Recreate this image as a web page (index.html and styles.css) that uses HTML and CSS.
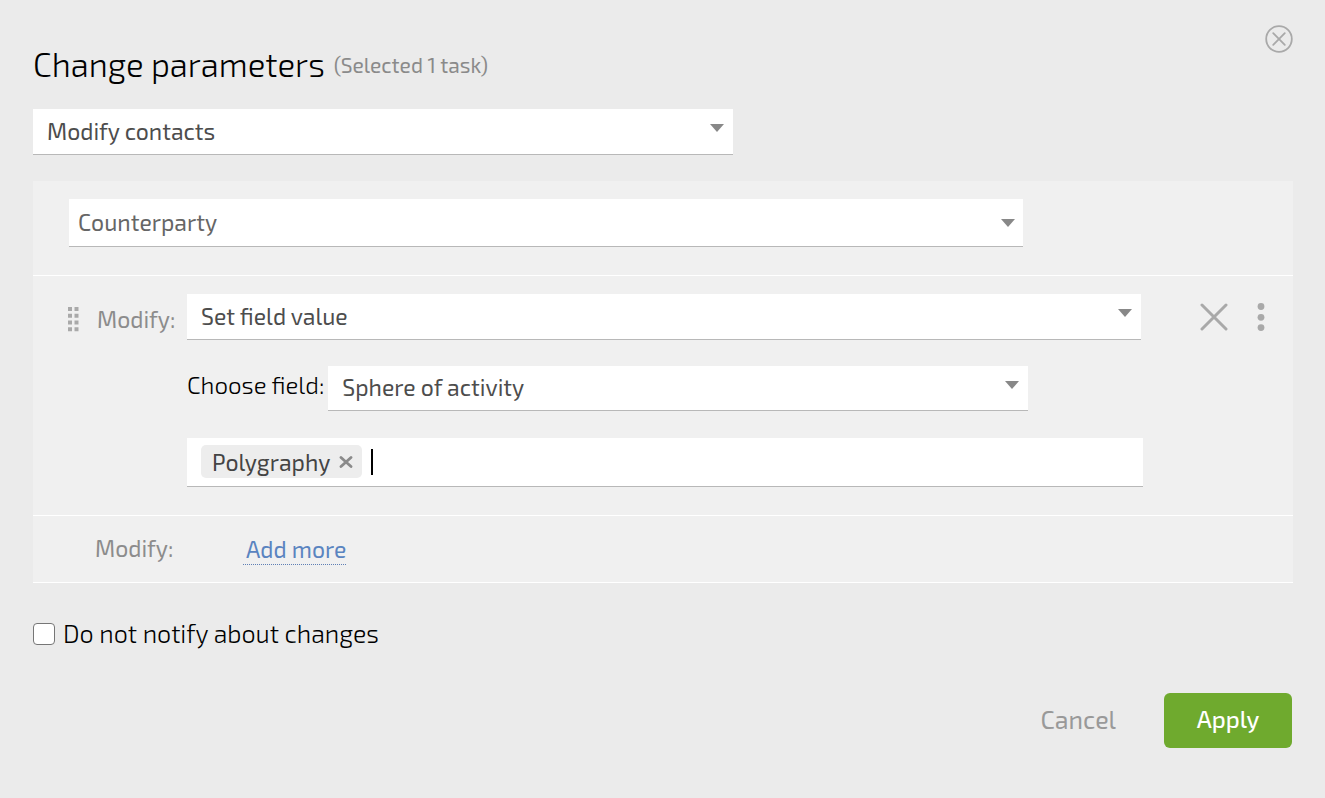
FILE: index.html
```html
<!DOCTYPE html>
<html lang="en">
<head>
<meta charset="utf-8">
<title>Change parameters</title>
<link rel="stylesheet" href="styles.css">
</head>
<body>
<form class="dialog">
  <header class="dialog-header">
    <h1 class="title">Change parameters</h1>
    <span class="subtitle">(Selected 1 task)</span>
    <button class="icon-button close" type="button" aria-label="Close">
      <svg width="28" height="28" viewBox="0 0 28 28" fill="none" stroke="#a9a9a9" stroke-width="1.8" stroke-linecap="round"><circle cx="14" cy="14" r="12.8"/><path d="M8.2 8.2l11.6 11.6M19.8 8.2L8.2 19.8"/></svg>
    </button>
  </header>

  <div class="select select-medium select-raised">
    <select aria-label="Action"><option>Modify contacts</option></select>
  </div>

  <section class="panel">
    <div class="row row-target">
      <div class="select select-wide select-target">
        <select aria-label="Contact type"><option>Counterparty</option></select>
      </div>
    </div>

    <div class="row row-rule">
      <svg class="grip" width="11" height="25" viewBox="0 0 11 25" fill="#a9a9a9"><path d="M0 0h4v4H0zM6.500 0h4v4H6.500zM0 6.800h4v4H0zM6.500 6.800h4v4H6.500zM0 13.600h4v4H0zM6.500 13.600h4v4H6.500zM0 20.300h4v4H0zM6.500 20.300h4v4H6.500z"/></svg>
      <label class="row-label" for="operation">Modify:</label>
      <div class="fields">
        <div class="select select-wide select-raised">
          <select id="operation"><option>Set field value</option></select>
        </div>
        <div class="field-line">
          <label for="field">Choose field:</label>
          <div class="select select-medium select-raised">
            <select id="field"><option>Sphere of activity</option></select>
          </div>
        </div>
        <div class="tags">
          <span class="tag">Polygraphy
            <button class="icon-button" type="button" aria-label="Remove Polygraphy">
              <svg width="14" height="12" viewBox="0 0 14 12" fill="none" stroke="#8a8a8a" stroke-width="2.8" stroke-linecap="round"><path d="M2 1.5l10 9M12 1.5l-10 9"/></svg>
            </button>
          </span>
          <span class="caret"></span>
          <input class="tag-input" type="text" aria-label="Field values">
        </div>
      </div>
      <div class="row-actions">
        <button class="icon-button" type="button" aria-label="Remove rule">
          <svg width="28" height="28" viewBox="0 0 28 28" fill="none" stroke="#a9a9a9" stroke-width="3" stroke-linecap="round"><path d="M2 2l24 24M26 2L2 26"/></svg>
        </button>
        <button class="icon-button" type="button" aria-label="More actions">
          <svg width="8" height="28" viewBox="0 0 8 28" fill="#a9a9a9"><circle cx="4" cy="3.5" r="3.4"/><circle cx="4" cy="14.3" r="3.4"/><circle cx="4" cy="24.6" r="3.4"/></svg>
        </button>
      </div>
    </div>

    <div class="row row-add">
      <span class="row-label">Modify:</span>
      <a class="add-link" href="#">Add more</a>
    </div>
  </section>

  <label class="notify"><input type="checkbox"><span>Do not notify about changes</span></label>

  <footer class="actions">
    <button class="button button-plain" type="button">Cancel</button>
    <button class="button button-primary" type="submit">Apply</button>
  </footer>
</form>
</body>
</html>
```
FILE: styles.css
```css
* {
  box-sizing: border-box;
}

body {
  margin: 0;
  background: #ebebeb;
  color: #000;
  font: 23px/28px "Exo 2", Roboto, sans-serif;
}

button,
input,
select {
  font: inherit;
  color: inherit;
}

.dialog {
  padding: 25px 32px 48px 33px;
}

.dialog-header {
  display: flex;
  align-items: flex-start;
  gap: 9px;
  margin-bottom: 24px;
}

.title {
  margin: 0;
  padding-top: 18px;
  font-size: 33px;
  line-height: 42px;
  font-weight: 300;
}

.subtitle {
  padding-top: 26px;
  color: #8a8a8a;
  font-size: 21px;
}

.icon-button {
  display: flex;
  padding: 0;
  border: 0;
  background: none;
  cursor: pointer;
}

.close {
  margin-left: auto;
}

.select {
  position: relative;
  flex: 1;
  width: 100%;
  height: 46px;
  background: #fff;
  border-bottom: 1px solid #b8b8b8;
}

.select select {
  display: block;
  width: 100%;
  height: 100%;
  padding: 0 36px 2px 14px;
  border: 0;
  background: none;
  color: #4d4d4d;
  appearance: none;
}

.select::after {
  content: "";
  position: absolute;
  top: 20px;
  right: 8px;
  border: 7px solid transparent;
  border-top: 8px solid #888;
  border-bottom: 0;
  pointer-events: none;
}

.select-medium {
  max-width: 700px;
}

.select-wide {
  max-width: 954px;
}

.select-raised::after {
  top: 15px;
  right: 9px;
}

.select-target {
  height: 48px;
}

.select-target select {
  padding-left: 9px;
  color: #666;
}

.panel {
  margin-top: 26px;
  background: #f0f0f0;
}

.row {
  display: flex;
  border-bottom: 1px solid #fff;
}

.row-target {
  padding: 18px 36px 28px;
}

.row-rule {
  padding: 18px 28px 28px 35px;
}

.grip {
  flex: none;
  margin: 13px 18px 0 0;
}

.row-label {
  flex: none;
  width: 90px;
  color: #8c8c8c;
}

.row-rule .row-label {
  padding-top: 11px;
}

.fields {
  flex: 1;
  display: flex;
  flex-direction: column;
  gap: 26px;
  max-width: 956px;
}

.fields > .select {
  flex: none;
}

.field-line {
  display: flex;
  gap: 4px;
  padding-bottom: 1px;
}

.field-line .select {
  height: 45px;
}

.field-line label {
  flex: none;
  min-width: 137px;
  padding-top: 5px;
  font-size: 24px;
  font-weight: 300;
}

.tags {
  display: flex;
  align-items: center;
  gap: 9px;
  height: 49px;
  padding: 0 14px 1px;
  background: #fff;
  border-bottom: 1px solid #b8b8b8;
}

.tag {
  display: flex;
  align-items: center;
  gap: 9px;
  height: 33px;
  padding: 1px 9px 0 11px;
  border-radius: 5px;
  background: #ededed;
  color: #444;
}

.caret {
  width: 2px;
  height: 26px;
  background: #000;
}

.tag-input {
  flex: 1;
  min-width: 0;
  border: 0;
  outline: 0;
  background: none;
}

.row-actions {
  display: flex;
  align-items: flex-start;
  gap: 29px;
  margin-left: auto;
  padding-top: 9px;
}

.row-add {
  padding: 18px 62px 17px;
}

.add-link {
  margin: 1px 0 0 58px;
  padding: 0 0 1px 3px;
  border-bottom: 1px dotted #5f7fb5;
  color: #5a84c0;
  text-decoration: none;
}

.notify {
  display: flex;
  align-items: center;
  gap: 8px;
  width: fit-content;
  margin-top: 36px;
  font-size: 25px;
  font-weight: 300;
}

.notify span {
  padding-bottom: 2px;
}

.notify input {
  appearance: none;
  width: 22px;
  height: 22px;
  margin: 0;
  border: 1px solid #767676;
  border-radius: 4px;
  background: #fff;
}

.notify input:checked {
  background: #6faa2e;
}

.actions {
  display: flex;
  justify-content: flex-end;
  gap: 17px;
  margin-top: 44px;
}

.button {
  min-width: 128px;
  height: 55px;
  padding: 0 31px 3px;
  border: 0;
  border-radius: 6px;
  font-size: 25px;
  cursor: pointer;
}

.button-plain {
  background: none;
  color: #999;
}

.button-primary {
  margin-right: 1px;
  background: #6faa2e;
  color: #fff;
  font-size: 24px;
  font-weight: 500;
}
```
